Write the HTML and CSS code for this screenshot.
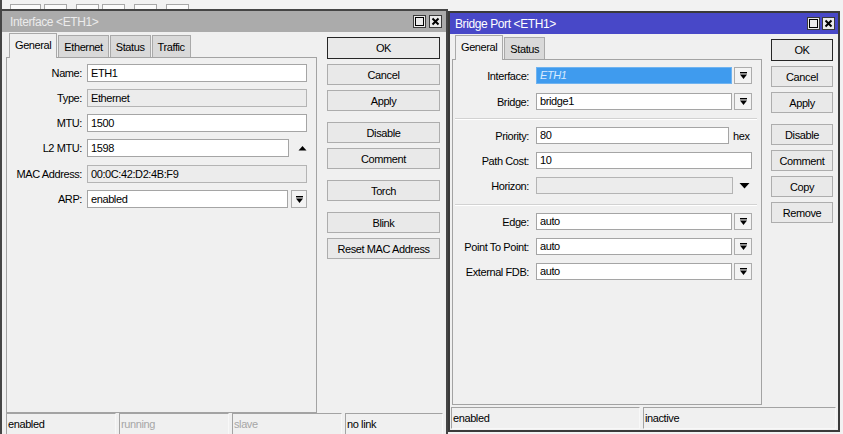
FILE: index.html
```html
<!DOCTYPE html>
<html>
<head>
<meta charset="utf-8">
<title>Interface / Bridge Port</title>
<link rel="stylesheet" href="styles.css">
</head>
<body>
<div class="desktop">
  <div class="toolbar">
    <span class="tb tb-wide"></span><span class="tb"></span><span class="tb sp"></span><span class="tb"></span><span class="tb sp"></span><span class="tb sp"></span>
  </div>

  <div class="win win-left">
    <div class="titlebar inactive">
      <span class="title">Interface &lt;ETH1&gt;</span>
      <span class="tbtns tbtns-left">
        <span class="tbtn"><svg width="11" height="11" viewBox="0 0 11 11"><rect x="1.5" y="1.5" width="8" height="8" fill="none" stroke="#000" stroke-width="1"/></svg></span>
        <span class="tbtn"><svg width="11" height="11" viewBox="0 0 11 11"><path d="M2.5 2.5l6 6M8.5 2.5l-6 6" stroke="#000" stroke-width="2"/></svg></span>
      </span>
    </div>
    <div class="wbody">
      <div class="main main-left">
        <div class="tabcol tabcol-left">
          <div class="tabs">
            <span class="tab active">General</span><span class="tab">Ethernet</span><span class="tab">Status</span><span class="tab">Traffic</span>
          </div>
          <div class="panel panel-left">
            <div class="form form-left">
              <span class="lbl">Name:</span>
              <div class="field"><span class="input lw-full">ETH1</span></div>
              <span class="lbl">Type:</span>
              <div class="field"><span class="input ro lw-full">Ethernet</span></div>
              <span class="lbl">MTU:</span>
              <div class="field"><span class="input lw-full">1500</span></div>
              <span class="lbl">L2 MTU:</span>
              <div class="field"><span class="input lw-l2">1598</span><span class="tri-up"><svg width="9" height="6" viewBox="0 0 9 6"><path d="M0.5 5.5h8L4.5 1z" fill="#000"/></svg></span></div>
              <span class="lbl lbl-low">MAC Address:</span>
              <div class="field field-low"><span class="input ro lw-full">00:0C:42:D2:4B:F9</span></div>
              <span class="lbl">ARP:</span>
              <div class="field"><span class="input lw-arp">enabled</span><span class="dd dd-left"><svg width="9" height="9" viewBox="0 0 9 9"><rect x="1" y="1" width="7" height="1.4" fill="#000"/><path d="M1 3.6h7L4.5 8z" fill="#000"/></svg></span></div>
            </div>
          </div>
        </div>
        <div class="btns btns-left">
          <span class="btn default">OK</span>
          <span class="btn">Cancel</span>
          <span class="btn">Apply</span>
          <span class="btn grp">Disable</span>
          <span class="btn">Comment</span>
          <span class="btn grp">Torch</span>
          <span class="btn grp">Blink</span>
          <span class="btn">Reset MAC Address</span>
        </div>
      </div>
      <div class="status status-left">
        <span class="cell cw-l">enabled</span>
        <span class="cell cw-l dim">running</span>
        <span class="cell cw-l dim">slave</span>
        <span class="cell cw-l4">no link</span>
      </div>
    </div>
  </div>

  <div class="win win-right">
    <div class="titlebar active">
      <span class="title">Bridge Port &lt;ETH1&gt;</span>
      <span class="tbtns tbtns-right">
        <span class="tbtn"><svg width="11" height="11" viewBox="0 0 11 11"><rect x="1.5" y="1.5" width="8" height="8" fill="none" stroke="#000" stroke-width="1"/></svg></span>
        <span class="tbtn"><svg width="11" height="11" viewBox="0 0 11 11"><path d="M2.5 2.5l6 6M8.5 2.5l-6 6" stroke="#000" stroke-width="2"/></svg></span>
      </span>
    </div>
    <div class="wbody">
      <div class="main main-right">
        <div class="tabcol tabcol-right">
          <div class="tabs">
            <span class="tab active">General</span><span class="tab">Status</span>
          </div>
          <div class="panel panel-right">
            <div class="form form-right grp1">
              <span class="lbl">Interface:</span>
              <div class="field"><span class="input sel rw-dd">ETH1</span><span class="dd dd-right"><svg width="9" height="9" viewBox="0 0 9 9"><rect x="1" y="1" width="7" height="1.4" fill="#000"/><path d="M1 3.6h7L4.5 8z" fill="#000"/></svg></span></div>
              <span class="lbl">Bridge:</span>
              <div class="field"><span class="input rw-dd">bridge1</span><span class="dd dd-right"><svg width="9" height="9" viewBox="0 0 9 9"><rect x="1" y="1" width="7" height="1.4" fill="#000"/><path d="M1 3.6h7L4.5 8z" fill="#000"/></svg></span></div>
            </div>
            <div class="sep sep1"></div>
            <div class="form form-right">
              <span class="lbl">Priority:</span>
              <div class="field"><span class="input rw-hex">80</span><span class="unit">hex</span></div>
              <span class="lbl">Path Cost:</span>
              <div class="field"><span class="input rw-full">10</span></div>
              <span class="lbl">Horizon:</span>
              <div class="field"><span class="input ro rw-hz"></span><span class="tri-down"><svg width="11" height="7" viewBox="0 0 11 7"><path d="M0.5 1h10L5.5 6.5z" fill="#000"/></svg></span></div>
            </div>
            <div class="sep sep2"></div>
            <div class="form form-right">
              <span class="lbl">Edge:</span>
              <div class="field"><span class="input rw-dd">auto</span><span class="dd dd-right"><svg width="9" height="9" viewBox="0 0 9 9"><rect x="1" y="1" width="7" height="1.4" fill="#000"/><path d="M1 3.6h7L4.5 8z" fill="#000"/></svg></span></div>
              <span class="lbl">Point To Point:</span>
              <div class="field"><span class="input rw-dd">auto</span><span class="dd dd-right"><svg width="9" height="9" viewBox="0 0 9 9"><rect x="1" y="1" width="7" height="1.4" fill="#000"/><path d="M1 3.6h7L4.5 8z" fill="#000"/></svg></span></div>
              <span class="lbl">External FDB:</span>
              <div class="field"><span class="input rw-dd">auto</span><span class="dd dd-right"><svg width="9" height="9" viewBox="0 0 9 9"><rect x="1" y="1" width="7" height="1.4" fill="#000"/><path d="M1 3.6h7L4.5 8z" fill="#000"/></svg></span></div>
            </div>
          </div>
        </div>
        <div class="btns btns-right">
          <span class="btn default">OK</span>
          <span class="btn">Cancel</span>
          <span class="btn">Apply</span>
          <span class="btn grp">Disable</span>
          <span class="btn">Comment</span>
          <span class="btn">Copy</span>
          <span class="btn">Remove</span>
        </div>
      </div>
      <div class="status status-right">
        <span class="cell cw-r1">enabled</span>
        <span class="cell cw-r2">inactive</span>
      </div>
    </div>
  </div>
</div>
</body>
</html>
```

FILE: styles.css
```css
* { box-sizing: border-box; }
html, body { margin: 0; padding: 0; }
body {
  width: 843px;
  height: 434px;
  overflow: hidden;
  background: #f0f0f0;
  font-family: "Liberation Sans", Arial, sans-serif;
  font-size: 11px;
  letter-spacing: -0.4px;
  color: #000;
}
.desktop { position: relative; width: 843px; height: 434px; overflow: hidden; background: #f2f2f2; }

/* toolbar peeking from behind */
.toolbar {
  display: flex;
  height: 9px;
  padding: 4px 0 0 8px;
  border-left: 2px solid #4a4a4a;
  overflow: hidden;
}
.tb { width: 23px; height: 12px; border: 1px solid #a8a8a8; background: #fbfbfb; margin-left: 3px; flex: none; }
.tb-wide { width: 31px; margin-left: 0; }
.tb.sp { margin-left: 9px; }

/* windows */
.win {
  position: absolute;
  background: #f0f0f0;
  border: 2px solid #454545;
  display: flex;
  flex-direction: column;
}
.win-left { left: 0; top: 9px; width: 448px; height: 440px; }
.win-right { left: 448px; top: 11px; width: 392px; height: 421px; border-color: #3a3a3a; }

.titlebar {
  height: 21px;
  flex: none;
  display: flex;
  align-items: center;
  justify-content: space-between;
  font-size: 12px;
}
.titlebar.inactive { background: #ababab; color: #ececec; padding: 0 4px 0 8px; }
.titlebar.active { background: #4848c8; color: #ffffff; padding: 0 3px 0 5px; }
.title { white-space: nowrap; }
.tbtns { display: flex; }
.tbtns-left { gap: 3px; }
.tbtns-right { gap: 2px; }
.tbtn {
  width: 13px; height: 13px;
  border: 1px solid #3a3a3a;
  background: #ebebeb;
  display: flex; align-items: center; justify-content: center;
}
.tbtn svg { display: block; }

.wbody { display: flex; flex-direction: column; flex: 1; }
.main { display: flex; align-items: flex-start; }
.main-left { padding: 0 4px; }
.main-right { padding: 0 2px; }

.tabcol-left { width: 311px; }
.tabcol-right { width: 310px; }

.tabs { height: 25px; display: flex; align-items: flex-end; padding-left: 3px; }
.tab {
  height: 22px;
  padding: 0 5px;
  border: 1px solid #a9a9a9;
  border-bottom: none;
  background: #d9d9d9;
  display: flex;
  align-items: center;
  margin-right: 1px;
  white-space: nowrap;
}
.tab.active {
  height: 25px;
  background: #f0f0f0;
  margin-bottom: -1px;
  position: relative;
  z-index: 1;
  padding-bottom: 2px;
}

.panel { border: 1px solid #a3a3a3; }
.panel-left { height: 356px; padding-top: 6px; }
.panel-right { height: 346px; padding-top: 7px; }

.form { display: grid; align-items: center; }
.form-left { grid-template-columns: 75px 220px; column-gap: 5px; row-gap: 7px; }
.form-right { grid-template-columns: 76px 216px; column-gap: 7px; row-gap: 8px; }
.form-right.grp1 { row-gap: 9px; }

.lbl { text-align: right; white-space: nowrap; }
.field { display: flex; align-items: center; }
.lbl-low, .field-low { margin-top: 1px; }

.input {
  display: block;
  border: 1px solid #a5a5a5;
  background: #fff;
  padding: 0 3px;
  white-space: nowrap;
  overflow: hidden;
}
.form-left .input { height: 18px; line-height: 16px; }
.form-right .input { height: 17px; line-height: 15px; }
.input.ro { background: #ececec; border-color: #b4b4b4; }
.input.sel { background: #3f9bee; border-color: #6fb3f0; color: #d6eaff; font-style: italic; }

.lw-full { width: 220px; }
.lw-l2 { width: 202px; }
.lw-arp { width: 201px; }
.rw-full { width: 216px; }
.rw-dd { width: 196px; }
.rw-hex { width: 193px; }
.rw-hz { width: 197px; }

.dd {
  display: flex; align-items: center; justify-content: center;
  border: 1px solid #acacac;
  background: #f3f3f3;
}
.dd svg { display: block; }
.dd-left { width: 16px; height: 18px; margin-left: 3px; }
.dd-right { width: 18px; height: 17px; margin-left: 2px; }
.tri-up { margin-left: 9px; display: flex; }
.tri-down { margin-left: 6px; display: flex; }
.unit { margin-left: 4px; }

.sep { height: 2px; border-top: 1px solid #d2d2d2; border-bottom: 1px solid #ffffff; margin: 0 4px 0 2px; }
.sep1 { margin-top: 8px; margin-bottom: 7px; }
.sep2 { margin-top: 10px; margin-bottom: 7px; }

/* command buttons */
.btns { display: flex; flex-direction: column; padding-top: 5px; }
.btns-left { width: 113px; margin-left: 10px; }
.btns-right { width: 62px; margin-left: 9px; }
.btn {
  height: 21px;
  margin-bottom: 5px;
  border: 1px solid #adadad;
  background: #e9e9e9;
  display: flex;
  align-items: center;
  justify-content: center;
  white-space: nowrap;
}
.btn.default { height: 22px; border-color: #262626; }
.btn.grp { margin-top: 6px; }

/* status bars */
.status { display: flex; gap: 3px; }
.status-left { padding-left: 4px; }
.status-right { padding-left: 1px; margin-top: 2px; }
.cell {
  height: 22px;
  border: 1px solid #a3a3a3;
  border-right-color: #f8f8f8;
  border-bottom-color: #f8f8f8;
  padding-left: 1px;
  line-height: 20px;
  white-space: nowrap;
  overflow: hidden;
}
.cell.dim { color: #a6a6a6; }
.cw-l { width: 110px; }
.cw-l4 { width: 98px; }
.cw-r1 { width: 189px; }
.cw-r2 { width: 193px; }
```
